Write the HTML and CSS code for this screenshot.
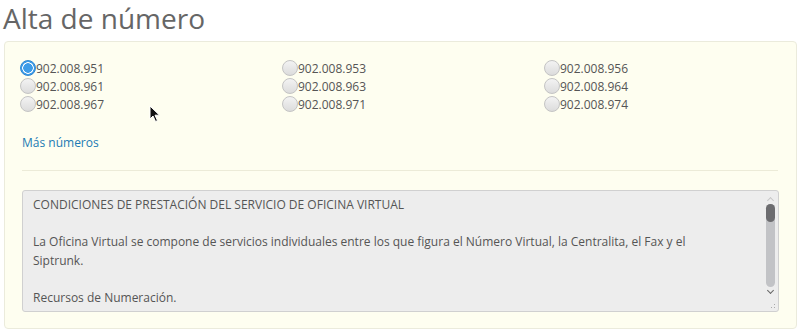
FILE: index.html
```html
<!DOCTYPE html>
<html lang="es">
<head>
    <meta charset="UTF-8">
    <title>Alta de número</title>
    <link rel="stylesheet" href="styles.css">
</head>
<body>
    <h1 class="title">Alta de número</h1>

    <!-- Panel -->
    <div class="panel">
        <div class="numbers">
            <label class="num"><input type="radio" name="num" checked>902.008.951</label>
            <label class="num"><input type="radio" name="num">902.008.953</label>
            <label class="num"><input type="radio" name="num">902.008.956</label>
            <label class="num"><input type="radio" name="num">902.008.961</label>
            <label class="num"><input type="radio" name="num">902.008.963</label>
            <label class="num"><input type="radio" name="num">902.008.964</label>
            <label class="num"><input type="radio" name="num">902.008.967</label>
            <label class="num"><input type="radio" name="num">902.008.971</label>
            <label class="num"><input type="radio" name="num">902.008.974</label>
        </div>

        <a class="more" href="#">Más números</a>
        <div class="sep"></div>

        <!-- Conditions box -->
        <div class="terms">
            <div class="terms-text">
                <p>CONDICIONES DE PRESTACIÓN DEL SERVICIO DE OFICINA VIRTUAL</p>
                <p>La Oficina Virtual se compone de servicios individuales entre los que figura el Número Virtual, la Centralita, el Fax y el Siptrunk.</p>
                <p>Recursos de Numeración.</p>
            </div>
            <div class="scrollbar">
                <span class="arrow up"></span>
                <div class="track"><div class="thumb"></div></div>
                <span class="arrow down"></span>
            </div>
            <div class="grip"></div>
        </div>
    </div>

    <svg class="cursor" width="12" height="18" viewBox="0 0 12 18">
        <path d="M1 1 L1 14 L4 11 L6.5 16.5 L8.5 15.6 L6 10.2 L10.5 10.2 Z" fill="#111" stroke="#fff" stroke-width="1"/>
    </svg>
</body>
</html>
```

FILE: styles.css
```css
* {
    margin: 0;
    padding: 0;
    box-sizing: border-box;
}
body {
    font-family: "Open Sans", "Liberation Sans", sans-serif;
    background-color: #fff;
    color: #555;
    padding: 0 3px 0 4px;
    position: relative;
}
.title {
    font-size: 28px;
    font-weight: 400;
    color: #666;
    line-height: 36px;
    margin-left: -1px;
}
/* Panel */
.panel {
    margin-top: 5px;
    background-color: #fefef0;
    border: 1px solid #ebebdc;
    border-radius: 4px;
    padding: 17px 16px 16px 15px;
}
.numbers {
    display: grid;
    grid-template-columns: 262px 262px 1fr;
}
.num {
    display: flex;
    align-items: center;
    height: 18px;
    font-size: 12px;
    color: #555;
}
.num input {
    appearance: none;
    -webkit-appearance: none;
    width: 16px;
    height: 16px;
    border-radius: 50%;
    border: 1px solid #c4c4c4;
    background: linear-gradient(#f3f3f3, #dcdcdc);
    margin: 0;
}
.num input:checked {
    border: 1px solid #2f87d2;
    background: radial-gradient(circle, #3e9ce8 0 4.5px, #fff 5px 5.5px, #3e9ce8 6px);
}
.more {
    display: inline-block;
    margin: 21px 0 0 2px;
    font-size: 12px;
    line-height: 18px;
    color: #1c7bb4;
    text-decoration: none;
}
.sep {
    height: 1px;
    background: #ecebd8;
    margin: 18px 2px 19px 2px;
}
/* Conditions box */
.terms {
    position: relative;
    height: 122px;
    margin: 0 1px 0 2px;
    background-color: #ededed;
    border: 1px solid #d0d0d0;
    border-radius: 3px;
    overflow: hidden;
}
.terms-text {
    padding: 5px 60px 0 10px;
    font-size: 12px;
    line-height: 18.5px;
    color: #555;
}
.terms-text p {
    margin-bottom: 18.5px;
}
.scrollbar {
    position: absolute;
    top: 4px;
    right: 2px;
    width: 11px;
    height: 98px;
    display: flex;
    flex-direction: column;
    align-items: center;
}
.arrow {
    width: 5px;
    height: 5px;
    border-left: 1px solid #c8c8c8;
    border-top: 1px solid #c8c8c8;
}
.arrow.up {
    transform: rotate(45deg);
    margin-top: 3px;
}
.arrow.down {
    transform: rotate(-135deg);
    border-color: #666;
    margin-top: 1px;
}
.track {
    flex: 1;
    width: 9px;
    margin-top: 1px;
    background: #c2c3c6;
    border-radius: 5px;
}
.thumb {
    height: 18px;
    background: #6c6c6f;
    border-radius: 5px;
}
.grip {
    position: absolute;
    right: 1px;
    bottom: 1px;
    width: 10px;
    height: 10px;
    background-image: radial-gradient(circle, #aaa 0.8px, transparent 1px);
    background-size: 3px 3px;
    clip-path: polygon(100% 0, 100% 100%, 0 100%);
}
.cursor {
    position: absolute;
    top: 105px;
    left: 149px;
}
```
